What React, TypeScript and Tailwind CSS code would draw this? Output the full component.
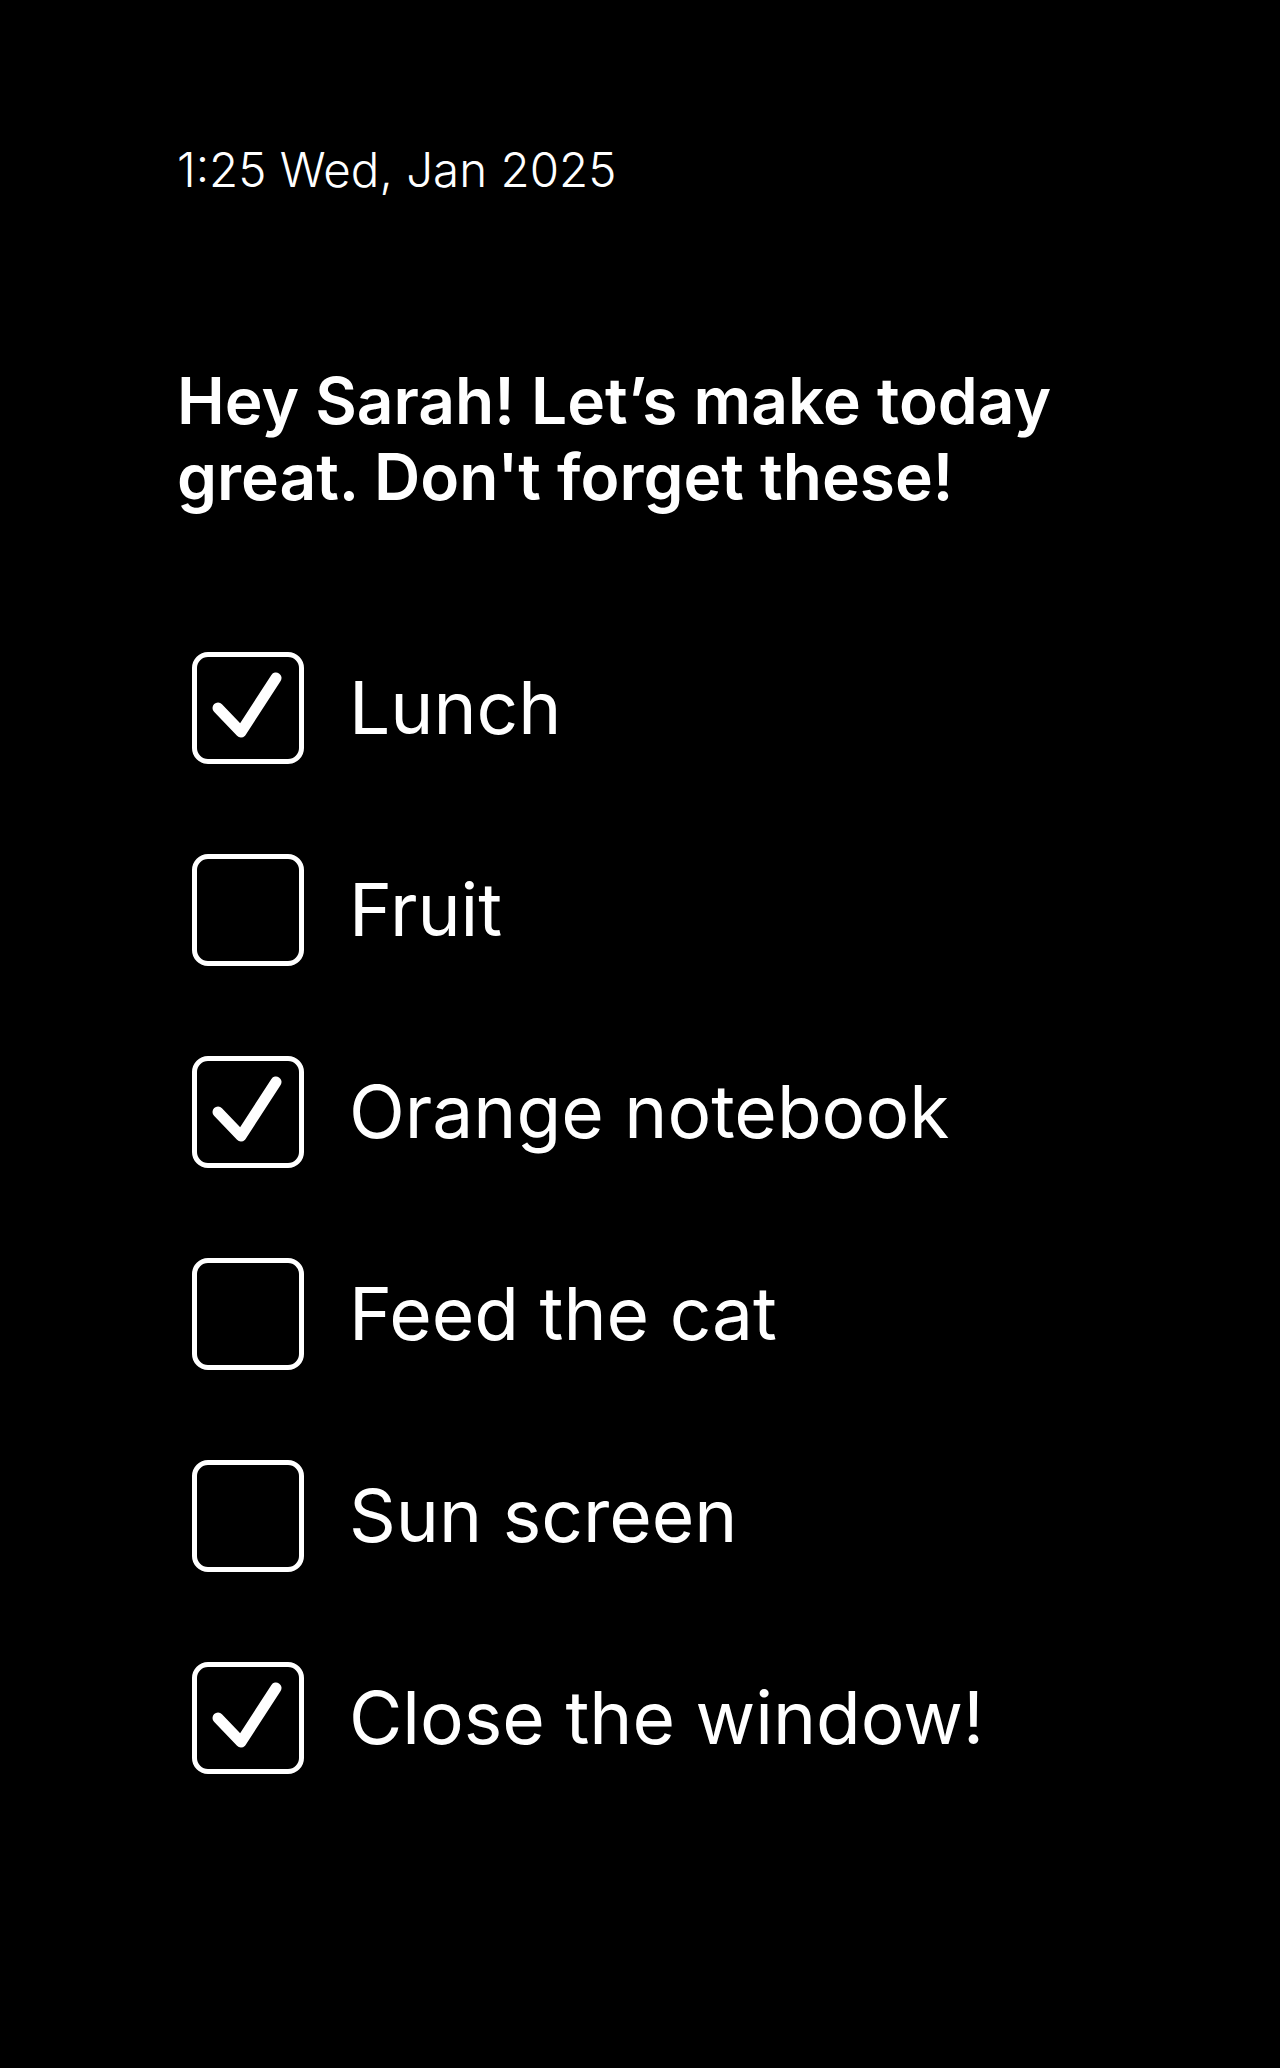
const ITEMS = [
  { label: 'Lunch', done: true },
  { label: 'Fruit', done: false },
  { label: 'Orange notebook', done: true },
  { label: 'Feed the cat', done: false },
  { label: 'Sun screen', done: false },
  { label: 'Close the window!', done: true },
]

function CheckBox({ checked }: { checked: boolean }) {
  return (
    <div className="w-[112px] h-[112px] shrink-0 rounded-[16px] border-[5px] border-white">
      {checked && (
        <svg viewBox="0 0 102 102" className="w-full h-full">
          <path
            d="M21 51 L44 75 L79 21"
            fill="none"
            stroke="white"
            strokeWidth={11}
            strokeLinecap="round"
            strokeLinejoin="round"
          />
        </svg>
      )}
    </div>
  )
}

export default function App() {
  return (
    <main
      className="min-h-[2068px] w-full bg-black text-white"
      style={{ fontFamily: 'Inter, "Noto Sans", sans-serif' }}
    >
      <div className="pl-[177px] pt-[146px]">
        <p className="text-[47.5px] leading-none font-light">1:25 Wed, Jan 2025</p>

        <h1 className="mt-[169px] text-[64px] leading-[76px] font-semibold max-w-[940px]">
          Hey Sarah! Let’s make today great. Don't forget these!
        </h1>

        <ul className="mt-[137px] ml-[15px] flex flex-col gap-[90px]">
          {ITEMS.map((item) => (
            <li key={item.label} className="flex items-center gap-[45px]">
              <CheckBox checked={item.done} />
              <span className="text-[73px] leading-none">{item.label}</span>
            </li>
          ))}
        </ul>
      </div>
    </main>
  )
}
